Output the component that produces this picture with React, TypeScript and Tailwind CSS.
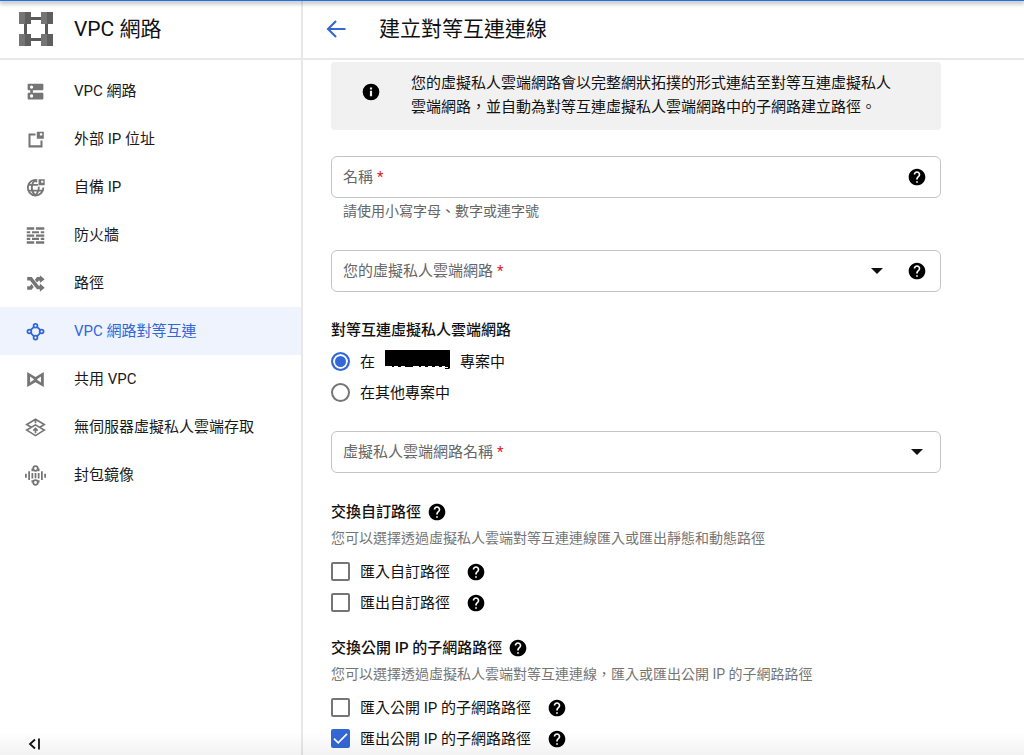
import type { ReactNode } from "react";

type NavItem = {
  label: string;
  icon: ReactNode;
  active?: boolean;
};

const NAV_ITEMS: NavItem[] = [
  {
    label: "VPC 網路",
    icon: (
      <path
        fillRule="evenodd"
        d="M4 3h16a1 1 0 0 1 1 1v5.500a1 1 0 0 1-1 1H9v3h11a1 1 0 0 1 1 1V20a1 1 0 0 1-1 1H4a1 1 0 0 1-1-1v-5.500a1 1 0 0 1 1-1h2v-3H4a1 1 0 0 1-1-1V4a1 1 0 0 1 1-1zM7.500 5a1.900 1.900 0 1 0 0 3.800a1.900 1.900 0 0 0 0-3.800zm0 10.200a1.900 1.900 0 1 0 0 3.800a1.900 1.900 0 0 0 0-3.800z"
      />
    ),
  },
  {
    label: "外部 IP 位址",
    icon: (
      <path
        fillRule="evenodd"
        d="M4 5h8v2.300H6.300v11.400h11.400V13H20v8H4zM13.500 3H21.500V11h-8zM17 4.800v2.700h2.700V4.800z"
      />
    ),
  },
  {
    label: "自備 IP",
    icon: (
      <>
        <g fill="none" stroke="currentColor" strokeWidth="2.1">
          <path d="M14 3.500A8.900 8.900 0 1 0 21 12" />
          <path d="M11.500 3.500c-5 4.500-5 12.500 0 17.500c3.500-3 4.500-6.500 4.300-10M11.500 3.500l2 2.500M4 9h11M4 15.500h16" />
        </g>
        <path fillRule="evenodd" d="M15.500 2.500h7V9.500h-7zM18.500 4.300v2.400h2.400V4.300z" />
      </>
    ),
  },
  {
    label: "防火牆",
    icon: (
      <path d="M2 2.500h8.500v3H2zM12.500 2.500H22v3h-9.500zM2 7h4v2.500H2zM8 7h8v2.500H8zM18 7h4v2.500h-4zM2 10.800h8.500v2.500H2zM12.500 10.800H22v2.500h-9.500zM2 14.700h4v2.500H2zM8 14.700h8v2.500H8zM18 14.700h4v2.500h-4zM2 18.700h8.500v2.800H2zM12.500 18.700H22v2.800h-9.500z" />
    ),
  },
  {
    label: "路徑",
    icon: (
      <path d="M2.500 4.500H7.700l8 10H17V12l5.500 4.800L17 21.500V18.500h-3.300L5.700 8.500H2.500zM17 2.500l5.500 4.500L17 11.500V8.800h-1.500l-1.700 2L11.300 7.700L13.700 4.700H17zM2.500 15h3l2-2.300l2.500 3.200L7.500 19h-5z" />
    ),
  },
  {
    label: "VPC 網路對等互連",
    active: true,
    icon: (
      <g fill="none" stroke="currentColor" strokeWidth="2">
        <circle cx="12" cy="5.500" r="2.200" />
        <circle cx="5" cy="12" r="2.200" />
        <circle cx="19" cy="12" r="2.200" />
        <circle cx="12" cy="19" r="2.200" />
        <path d="M10.300 6.800L6.500 10.300M13.700 6.800l3.800 3.500M6.500 13.700l3.800 3.800M17.500 13.700l-3.800 3.800" />
      </g>
    ),
  },
  {
    label: "共用 VPC",
    icon: (
      <path
        fillRule="evenodd"
        d="M2.500 3.500L12 9l9.500-5.500v17L12 15l-9.500 5.500zM5.800 8.500v7l4.700-3.500zM18.200 8.500L13.500 12l4.700 3.500z"
      />
    ),
  },
  {
    label: "無伺服器虛擬私人雲端存取",
    icon: (
      <g fill="none" stroke="currentColor" strokeWidth="1.900">
        <path d="M7 11.700L2 8.500L12 2.500l10 6l-5 3.200M12 2.500V7" />
        <path d="M12 9L2 15l10 6.300L22 15z" />
        <path d="M12 18.500v-5M9.500 15.500l2.500-2.500l2.500 2.500" />
      </g>
    ),
  },
  {
    label: "封包鏡像",
    icon: (
      <g fill="none" stroke="currentColor" strokeWidth="2">
        <path d="M1 10v4.500M4.700 7v10M8.400 4v3M8.400 9v6.500M8.400 17.500v2.500M12 9v6M15.600 4v3M15.600 9v6.500M15.600 17.500v2.500M19.300 7v10M23 10v4.500" />
        <circle cx="12" cy="4" r="2.600" />
        <circle cx="12" cy="20" r="2.600" />
      </g>
    ),
  },
];

const HelpIcon = () => (
  <svg viewBox="0 0 24 24" className="size-5 shrink-0" fill="currentColor">
    <path d="M12 2C6.480 2 2 6.480 2 12s4.480 10 10 10 10-4.480 10-10S17.520 2 12 2zm1 17h-2v-2h2v2zm2.070-7.750l-.9.920C13.450 12.900 13 13.500 13 15h-2v-.5c0-1.100.450-2.100 1.170-2.830l1.240-1.260c.370-.360.590-.860.590-1.410 0-1.100-.9-2-2-2s-2 .9-2 2H8c0-2.210 1.790-4 4-4s4 1.790 4 4c0 .880-.360 1.680-.930 2.250z" />
  </svg>
);

const HelpButton = ({ label }: { label: string }) => (
  <button type="button" aria-label={label} className="shrink-0 text-black">
    <HelpIcon />
  </button>
);

const Caret = () => (
  <svg
    viewBox="0 0 12 6"
    className="pointer-events-none h-[6px] w-3 shrink-0"
    fill="currentColor"
  >
    <path d="M0 0h12L6 6z" />
  </svg>
);

const FieldLabel = ({ id, text }: { id: string; text: string }) => (
  <label
    htmlFor={id}
    className="pointer-events-none absolute inset-y-0 left-[11px] flex items-center text-[#666]"
  >
    {text}
    <span className="ml-1 text-[#e02020]">*</span>
  </label>
);

const FIELD =
  "relative flex h-[42px] items-center rounded-[6px] border border-[#c4c4c4] pr-[13px]";

const RADIO =
  "size-[19px] appearance-none rounded-full border-2 border-[#757575] checked:border-[#3367d6] checked:bg-[#3367d6] checked:shadow-[inset_0_0_0_2px_white]";

const CheckRow = ({
  id,
  label,
  checked,
}: {
  id: string;
  label: string;
  checked?: boolean;
}) => (
  <div className="flex h-[31px] items-center">
    <span className="relative flex size-[19px]">
      <input
        id={id}
        type="checkbox"
        defaultChecked={checked}
        className="peer size-[19px] appearance-none rounded-[2px] border-2 border-[#757575] checked:border-[#3367d6] checked:bg-[#3367d6]"
      />
      <svg
        viewBox="0 0 19 19"
        className="pointer-events-none absolute inset-0 hidden text-white peer-checked:block"
        fill="none"
        stroke="currentColor"
        strokeWidth="1.700"
      >
        <path d="M3 9.700l4.200 4.200l8.800-9" />
      </svg>
    </span>
    <label htmlFor={id} className="mr-4 ml-[10px]">
      {label}
    </label>
    <HelpButton label={`${label}說明`} />
  </div>
);

const SectionTitle = ({ text }: { text: string }) => (
  <div className="flex h-[31px] items-center gap-[6px]">
    <h2 className="font-medium">{text}</h2>
    <HelpButton label={`${text}說明`} />
  </div>
);

const Sidebar = () => (
  <aside className="flex w-[303px] shrink-0 flex-col border-r-2 border-[#e8e8e8]">
    <div className="flex h-[60px] shrink-0 items-center border-b-2 border-[#e8e8e8] pl-[19px]">
      <svg viewBox="0 0 34 34" className="size-[34px]">
        <path
          fill="#5a5a5a"
          d="M12 5h10v3H12zM12 26h10v3H12zM5 12h3v10H5zM26 12h3v10h-3z"
        />
        <path fill="#757575" d="M0 0h12v12H0zM22 0h12v12H22zM0 22h12v12H0zM22 22h12v12H22z" />
        <path fill="#5f5f5f" d="M6 0h6v12H6zM28 0h6v12h-6zM6 22h6v12H6zM28 22h6v12h-6z" />
      </svg>
      <span className="ml-[21px] text-[21px]">VPC 網路</span>
    </div>
    <nav className="flex flex-col pt-[7px]">
      {NAV_ITEMS.map((item) => (
        <a
          key={item.label}
          href="#"
          aria-current={item.active ? "page" : undefined}
          className={`flex h-12 items-center pl-[25px] ${
            item.active ? "bg-[#eef3fe] text-[#3367d6]" : "text-[#1a1a1a]"
          }`}
        >
          <svg
            viewBox="0 0 24 24"
            className={`size-[21px] ${item.active ? "" : "text-[#757575]"}`}
            fill="currentColor"
          >
            {item.icon}
          </svg>
          <span className="ml-7">{item.label}</span>
        </a>
      ))}
    </nav>
    <button type="button" aria-label="收合選單" className="mt-auto ml-7 pb-[5px]">
      <svg
        viewBox="0 0 14 12"
        className="h-3 w-[14px]"
        fill="none"
        stroke="currentColor"
        strokeWidth="1.800"
      >
        <path d="M7 1.500L2 6l5 4.500M11 0.500v11" />
      </svg>
    </button>
  </aside>
);

const App = () => {
  return (
    <div
      lang="zh-Hant"
      className="relative flex h-screen overflow-hidden bg-white font-['Roboto','Noto_Sans_CJK_TC',sans-serif] text-[15px] leading-6 text-[#111]"
    >
      <div className="pointer-events-none absolute inset-x-0 top-0 z-10 h-px bg-[#1a73e8] shadow-[0_1px_5px_1px_rgba(0,0,0,0.4)]" />
      <div className="pointer-events-none absolute inset-x-0 bottom-0 z-10 h-6 bg-linear-to-t from-black/5 to-transparent" />
      <Sidebar />

      <div className="flex min-w-0 flex-1 flex-col">
        <header className="flex h-[60px] shrink-0 items-center border-b-2 border-[#e8e8e8] pl-[21px]">
          <button type="button" aria-label="返回" className="text-[#3367d6]">
            <svg viewBox="0 0 24 24" className="size-6" fill="currentColor">
              <path d="M21.500 10.900H6.500l6.300-6.200L11.300 3.200L2.500 12l8.800 8.800l1.500-1.500L6.500 13.100h15z" />
            </svg>
          </button>
          <h1 className="ml-[31px] text-[21px]">建立對等互連連線</h1>
        </header>

        <main className="flex-1 overflow-hidden px-7 pt-[2px]">
          <form className="max-w-[610px]">
            <div className="flex items-start rounded-[4px] bg-[#f1f1f1] pt-[9px] pr-10 pb-[11px] pl-[30px]">
              <svg
                viewBox="0 0 24 24"
                className="mt-[11px] size-5 shrink-0 text-black"
                fill="currentColor"
              >
                <path d="M12 2a10 10 0 1 0 0 20a10 10 0 0 0 0-20zm1.300 15h-2.600v-6.500h2.600zm0-8h-2.600V6.500h2.600z" />
              </svg>
              <p className="ml-[30px]">
                您的虛擬私人雲端網路會以完整網狀拓撲的形式連結至對等互連虛擬私人雲端網路，並自動為對等互連虛擬私人雲端網路中的子網路建立路徑。
              </p>
            </div>

            <div className={`mt-[26px] ${FIELD}`}>
              <input id="name" className="h-full min-w-0 flex-1 px-3 outline-none" />
              <FieldLabel id="name" text="名稱" />
              <HelpButton label="名稱說明" />
            </div>
            <p className="pl-3 text-[14px] leading-[26px] text-[#666]">
              請使用小寫字母、數字或連字號
            </p>

            <div className={`mt-[26px] ${FIELD}`}>
              <select
                id="network"
                defaultValue=""
                className="h-full min-w-0 flex-1 appearance-none px-3 outline-none"
              >
                <option value="" />
              </select>
              <FieldLabel id="network" text="您的虛擬私人雲端網路" />
              <Caret />
              <span className="ml-6 flex">
                <HelpButton label="虛擬私人雲端網路說明" />
              </span>
            </div>

            <fieldset className="mt-[23px]">
              <legend className="h-[31px] leading-[31px] font-medium">
                對等互連虛擬私人雲端網路
              </legend>
              <div className="flex h-[31px] items-center">
                <input
                  id="this-project"
                  type="radio"
                  name="project"
                  defaultChecked
                  className={RADIO}
                />
                <label htmlFor="this-project" className="ml-[10px] flex items-center">
                  在
                  <svg viewBox="0 0 66 24" className="mr-[9px] ml-[10px] h-6 w-[66px]">
                    <path d="M0 0h65v16H0z" />
                    <path d="M7 16h2v1H7zM13 16h3v1h-3zM20 16h8v1h-8zM34 16h2v1h-2zM40 16h3v1h-3zM47 16h3v1h-3zM54 16h3v1h-3zM60 16h5v2l-1 1h-4v-1h3v-1h-3z" />
                  </svg>
                  專案中
                </label>
              </div>
              <div className="flex h-[31px] items-center">
                <input
                  id="other-project"
                  type="radio"
                  name="project"
                  className={RADIO}
                />
                <label htmlFor="other-project" className="ml-[10px]">
                  在其他專案中
                </label>
              </div>
            </fieldset>

            <div className={`mt-[23px] ${FIELD}`}>
              <select
                id="peer-network"
                defaultValue=""
                className="h-full min-w-0 flex-1 appearance-none px-3 outline-none"
              >
                <option value="" />
              </select>
              <FieldLabel id="peer-network" text="虛擬私人雲端網路名稱" />
              <span className="flex w-5 justify-center">
                <Caret />
              </span>
            </div>

            <section className="mt-[23px]">
              <SectionTitle text="交換自訂路徑" />
              <p className="mb-[7px] text-[14px] leading-[22px] text-[#757575]">
                您可以選擇透過虛擬私人雲端對等互連連線匯入或匯出靜態和動態路徑
              </p>
              <CheckRow id="import-custom" label="匯入自訂路徑" />
              <CheckRow id="export-custom" label="匯出自訂路徑" />
            </section>

            <section className="mt-[14px]">
              <SectionTitle text="交換公開 IP 的子網路路徑" />
              <p className="mb-[7px] text-[14px] leading-[22px] text-[#757575]">
                您可以選擇透過虛擬私人雲端對等互連連線，匯入或匯出公開 IP 的子網路路徑
              </p>
              <CheckRow id="import-public" label="匯入公開 IP 的子網路路徑" />
              <CheckRow id="export-public" label="匯出公開 IP 的子網路路徑" checked />
            </section>
          </form>
        </main>
      </div>
    </div>
  );
};

export default App;
